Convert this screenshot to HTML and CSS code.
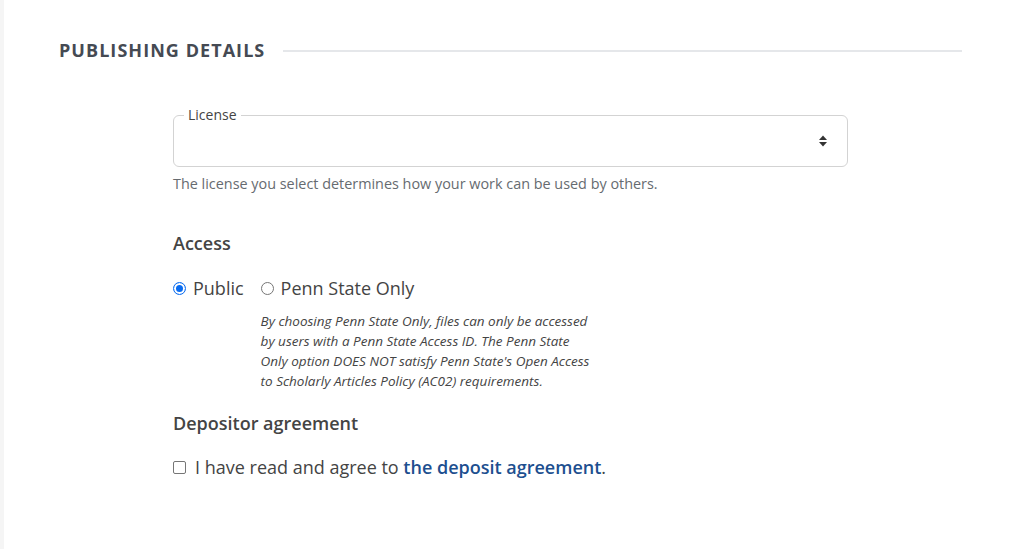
FILE: index.html
```html
<!DOCTYPE html>
<html>
<head>
<meta charset="utf-8">
<link rel="stylesheet" href="styles.css">
</head>
<body>
<div class="page">
  <section class="section">
    <div class="section-head">
      <h2 class="section-title">PUBLISHING DETAILS</h2>
      <div class="section-rule"></div>
    </div>
    <div class="form">
      <div class="select-field">
        <span class="select-legend">License</span>
        <svg class="select-arrows" width="10" height="14" viewBox="0 0 10 14"><path d="M5 1.5 L9 6 H1 Z" fill="#333"/><path d="M5 12.5 L9 8 H1 Z" fill="#333"/></svg>
      </div>
      <p class="help">The license you select determines how your work can be used by others.</p>

      <h3 class="group-title access-title">Access</h3>
      <div class="radios">
        <label class="radio"><span class="radio-dot checked"></span>Public</label>
        <div class="radio-col">
          <label class="radio"><span class="radio-dot"></span>Penn State Only</label>
          <p class="note">By choosing Penn State Only, files can only be accessed by users with a Penn State Access ID. The Penn State Only option DOES NOT satisfy Penn State's Open Access to Scholarly Articles Policy (AC02) requirements.</p>
        </div>
      </div>

      <h3 class="group-title dep-title">Depositor agreement</h3>
      <label class="check"><span class="checkbox"></span>I have read and agree to <a class="link" href="#">the deposit agreement</a>.</label>
    </div>
  </section>
</div>
</body>
</html>
```
FILE: styles.css
```css
* { box-sizing: border-box; }
html, body { margin: 0; padding: 0; background: #fff; }
body { font-family: "Open Sans", "Noto Sans", sans-serif; color: #444; }
.page {
  border-left: 4px solid #f5f5f5;
  min-height: 549px;
  padding: 38px 52px 0 55px;
}
.section-head {
  display: flex;
  align-items: center;
  gap: 18px;
}
.section-title {
  margin: 0;
  font-size: 18px;
  font-weight: 700;
  letter-spacing: 1.05px;
  color: #454a53;
  line-height: 24px;
}
.section-rule {
  flex: 1;
  height: 2px;
  background: #e5e7ea;
  margin-top: 2px;
}
.form {
  width: 675px;
  margin: 53px 0 0 114px;
}
.select-field {
  position: relative;
  height: 52px;
  border: 1px solid #d3d3d3;
  border-radius: 6px;
}
.select-legend {
  position: absolute;
  left: 10px;
  top: -10px;
  padding: 0 4px;
  background: #fff;
  font-size: 14px;
  line-height: 18px;
  color: #444;
}
.select-arrows {
  position: absolute;
  right: 19px;
  top: 18px;
}
.help {
  margin: 7px 0 0;
  font-size: 14.4px;
  line-height: 20px;
  color: #666b70;
}
.group-title {
  margin: 0;
  font-size: 18px;
  font-weight: 600;
  line-height: 24px;
  color: #444;
}
.access-title { margin-top: 37px; }
.radios {
  display: flex;
  align-items: flex-start;
  gap: 17px;
  margin-top: 21px;
}
.radio {
  display: flex;
  align-items: center;
  font-size: 18px;
  line-height: 24px;
  color: #444;
}
.radio-dot {
  width: 13px;
  height: 13px;
  border-radius: 50%;
  border: 1px solid #767676;
  margin-right: 7px;
  background: #fff;
}
.radio-dot.checked {
  border: 1px solid #0a6cf0;
  box-shadow: inset 0 0 0 2px #fff, inset 0 0 0 6px #0a6cf0;
}
.note {
  margin: 11px 0 0;
  width: 334px;
  font-size: 13.5px;
  line-height: 20px;
  font-style: italic;
  color: #444;
}
.dep-title { margin-top: 20px; }
.check {
  display: flex;
  align-items: center;
  margin-top: 20px;
  font-size: 18px;
  line-height: 24px;
  color: #444;
  white-space: pre;
}
.checkbox {
  width: 13px;
  height: 13px;
  border: 1px solid #767676;
  border-radius: 2px;
  margin-right: 9px;
  background: #fff;
}
.link {
  color: #1d4f8f;
  font-weight: 600;
  text-decoration: none;
}
```
